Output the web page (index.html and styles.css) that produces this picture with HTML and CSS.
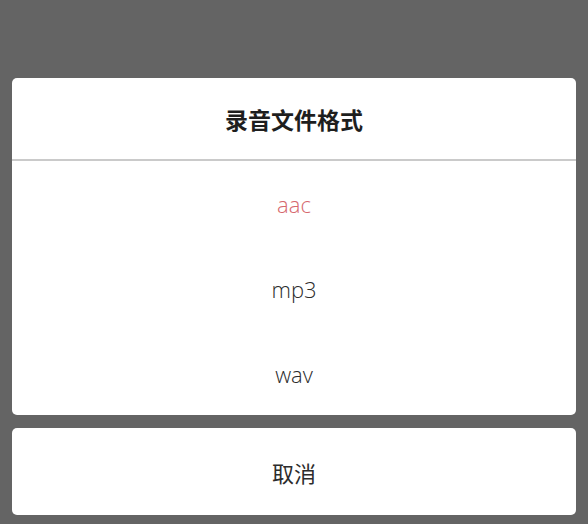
FILE: index.html
```html
<!DOCTYPE html>
<html lang="zh">
<head>
<meta charset="utf-8">
<link rel="stylesheet" href="styles.css">
</head>
<body>
<div class="sheet">
  <div class="card">
    <div class="title">录音文件格式</div>
    <div class="options">
      <div class="option selected">aac</div>
      <div class="option">mp3</div>
      <div class="option">wav</div>
    </div>
  </div>
  <div class="card cancel">取消</div>
</div>
</body>
</html>
```
FILE: styles.css
```css
html, body {
  margin: 0;
  padding: 0;
  background: #646464;
  height: 100%;
}
body {
  font-family: "Open Sans", "Noto Sans CJK SC", sans-serif;
}
.sheet {
  display: flex;
  flex-direction: column;
  gap: 13px;
  padding: 78px 12px 0;
}
.card {
  background: #fff;
  border-radius: 5px;
}
.title {
  height: 81px;
  display: flex;
  align-items: center;
  justify-content: center;
  font-family: "Noto Sans CJK SC", sans-serif;
  font-weight: 700;
  font-size: 23px;
  color: #1e1e1e;
  border-bottom: 2px solid #cacaca;
}
.options {
  display: grid;
  grid-template-rows: repeat(3, 1fr);
  height: 254px;
}
.option {
  display: flex;
  align-items: center;
  justify-content: center;
  padding-top: 2px;
  font-weight: 300;
  font-size: 22px;
  color: #2c2c2c;
}
.option.selected {
  color: #d6686e;
}
.cancel {
  height: 87px;
  display: flex;
  align-items: center;
  justify-content: center;
  font-family: "Noto Sans CJK SC", sans-serif;
  font-weight: 400;
  font-size: 22px;
  color: #2c2c2c;
}
```
